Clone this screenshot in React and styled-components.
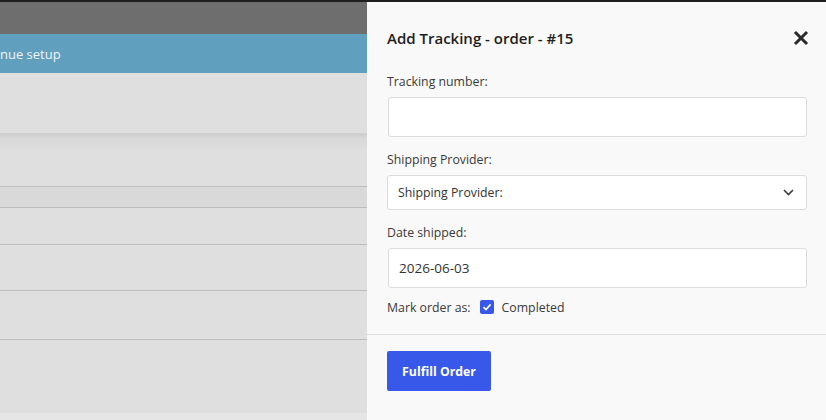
import React from 'react';
import styled, { createGlobalStyle } from 'styled-components';

const GlobalStyle = createGlobalStyle`
  html, body {
    margin: 0;
    padding: 0;
    background: #dedede;
  }
  body {
    font-family: 'Open Sans', 'Noto Sans', sans-serif;
  }
`;

const Screen = styled.div`
  display: flex;
  width: 826px;
  height: 420px;
  border-top: 2px solid #1f1f1f;
  box-sizing: border-box;
  overflow: hidden;
`;

// dimmed page behind the drawer
const Page = styled.div`
  flex: 1;
  display: flex;
  flex-direction: column;
  background: #dedede;
`;

const TopBar = styled.div`
  height: 32px;
  background: #6e6e6e;
`;

const Banner = styled.div`
  height: 39px;
  background: #609fbe;
  color: #eef4f8;
  font-size: 13px;
  display: flex;
  align-items: center;
`;

const Hero = styled.div`
  height: 60px;
  background: #dfdfdf;
`;

const Row = styled.div`
  height: ${(p) => p.h}px;
  background: ${(p) => p.bg || '#dfdfdf'};
  border-bottom: ${(p) => (p.line ? '1px solid #bdbdbd' : 'none')};
`;

const ShadowRow = styled(Row)`
  background: linear-gradient(#cdcdcd 0, #d9d9d9 6px, #dfdfdf 18px, #dfdfdf 100%);
`;

const Panel = styled.div`
  width: 459px;
  background: #f9f9f9;
  display: flex;
  flex-direction: column;
  color: #2c2c2c;
`;

const Header = styled.div`
  display: flex;
  justify-content: space-between;
  align-items: center;
  padding: 25px 17px 0 20px;
  height: 22px;
`;

const Title = styled.h2`
  margin: 0;
  font-size: 15px;
  font-weight: 600;
  color: #1e1e1e;
`;

const Close = styled.button`
  border: 0;
  background: none;
  padding: 0;
  width: 16px;
  height: 16px;
  display: flex;
  cursor: pointer;
`;

const Form = styled.div`
  display: flex;
  flex-direction: column;
  padding: 0 19px 0 20px;
  margin-top: 24px;
`;

const Label = styled.label`
  font-size: 12.3px;
  color: #3a3a3a;
  line-height: 18px;
  margin-bottom: 6px;
`;

const Field = styled.div`
  height: ${(p) => p.h}px;
  margin-left: ${(p) => p.shift ?? 1}px;
  margin-bottom: 14px;
  background: #fff;
  border: 1px solid #dcdcdc;
  border-radius: 3px;
  box-sizing: border-box;
  display: flex;
  align-items: center;
  justify-content: space-between;
  padding: 0 12px 0 10px;
  font-size: ${(p) => p.fs || 12.3}px;
  color: #333;
`;

const CheckLine = styled.div`
  display: flex;
  align-items: center;
  font-size: 12.3px;
  color: #3a3a3a;
  margin-top: -4px;
  height: 18px;
`;

const Box = styled.span`
  width: 14px;
  height: 14px;
  border-radius: 2px;
  background: #3858e9;
  display: inline-flex;
  align-items: center;
  justify-content: center;
  margin: 0 8px 0 9px;
`;

const Divider = styled.div`
  height: 1px;
  background: #dcdcdc;
  margin-top: 18px;
`;

const Footer = styled.div`
  padding: 16px 20px;
`;

const Button = styled.button`
  width: 104px;
  height: 40px;
  border: 0;
  border-radius: 2px;
  background: #3858e9;
  color: #fff;
  font-family: inherit;
  font-size: 12.3px;
  font-weight: 700;
  cursor: pointer;
`;

const App = () => {
  return (
    <>
      <GlobalStyle />
      <Screen>
        <Page>
          <TopBar />
          <Banner>nue setup</Banner>
          <Hero />
          <ShadowRow h={53} line />
          <Row h={20} bg="#d9d9d9" line />
          <Row h={36} line />
          <Row h={45} line />
          <Row h={48} line />
          <Row h={73} />
          <Row h={7} bg="#e6e6e6" />
        </Page>
        <Panel>
          <Header>
            <Title>Add Tracking - order - #15</Title>
            <Close aria-label="close">
              <svg width="16" height="16" viewBox="0 0 16 16">
                <path d="M2 2 L14 14 M14 2 L2 14" stroke="#2a2a2a" strokeWidth="3" />
              </svg>
            </Close>
          </Header>
          <Form>
            <Label>Tracking number:</Label>
            <Field h={40} />
            <Label>Shipping Provider:</Label>
            <Field h={35} shift={0}>
              <span>Shipping Provider:</span>
              <svg width="11" height="7" viewBox="0 0 11 7">
                <path d="M1 1 L5.5 5.5 L10 1" fill="none" stroke="#3c3c3c" strokeWidth="1.6" />
              </svg>
            </Field>
            <Label>Date shipped:</Label>
            <Field h={40} fs={13.5}>
              <span>2026-06-03</span>
            </Field>
            <CheckLine>
              Mark order as:
              <Box>
                <svg width="10" height="10" viewBox="0 0 10 10">
                  <path d="M1.5 5.2 L4 7.6 L8.6 2.4" fill="none" stroke="#fff" strokeWidth="1.6" />
                </svg>
              </Box>
              Completed
            </CheckLine>
          </Form>
          <Divider />
          <Footer>
            <Button>Fulfill Order</Button>
          </Footer>
        </Panel>
      </Screen>
    </>
  );
};

export default App;
